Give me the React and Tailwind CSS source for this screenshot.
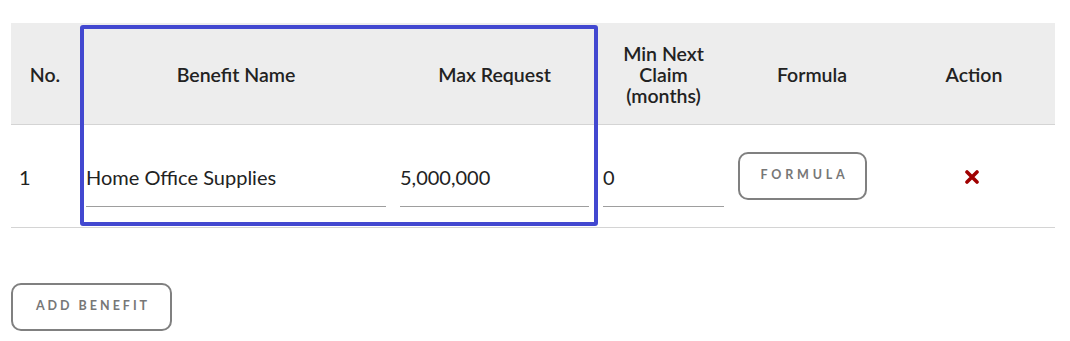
import React from "react"

const cols = [68, 314, 203, 135, 162, 162]

const App = () => {
  return (
    <div className="w-[1070px] h-[341px] bg-white relative" style={{ fontFamily: "Lato, 'Open Sans', sans-serif" }}>
      <div className="pt-[23px] px-[11px]">
        <table className="table-fixed border-collapse w-[1044px] text-[#222]">
          <colgroup>
            {cols.map((w, i) => (
              <col key={i} style={{ width: w }} />
            ))}
          </colgroup>
          <thead>
            <tr className="bg-[#ededed] border-b border-[#d4d4d4] h-[101px]">
              <th className="text-[19.5px] font-semibold leading-[21px] text-center pt-[3px]">No.</th>
              <th className="text-[19.5px] font-semibold leading-[21px] text-center pt-[3px]">Benefit Name</th>
              <th className="text-[19.5px] font-semibold leading-[21px] text-center pt-[3px]">Max Request</th>
              <th className="text-[19.5px] font-semibold leading-[21px] text-center pt-[3px] px-2">Min Next Claim (months)</th>
              <th className="text-[19.5px] font-semibold leading-[21px] text-center pt-[3px]">Formula</th>
              <th className="text-[19.5px] font-semibold leading-[21px] text-center pt-[3px]">Action</th>
            </tr>
          </thead>
          <tbody>
            <tr className="border-b border-[#d4d4d4] h-[103px]">
              <td className="px-2 text-[20px] pt-[3px]">1</td>
              <td className="px-[7px] pt-[3px]">
                <input readOnly value="Home Office Supplies" className="w-full h-[59px] border-b border-[#9e9e9e] text-[20px] outline-none bg-transparent" />
              </td>
              <td className="px-[7px] pt-[3px]">
                <input readOnly value="5,000,000" className="w-full h-[59px] border-b border-[#9e9e9e] text-[20px] outline-none bg-transparent" />
              </td>
              <td className="px-[7px] pt-[3px]">
                <input readOnly value="0" className="w-full h-[59px] border-b border-[#9e9e9e] text-[20px] outline-none bg-transparent" />
              </td>
              <td className="px-[7px]">
                <button className="w-[129px] h-[48px] border-2 border-[#808080] rounded-[10px] text-[12.5px] font-bold tracking-[3.8px] text-[#777] pl-[4px]">
                  FORMULA
                </button>
              </td>
              <td className="text-center">
                <svg width="14" height="14" viewBox="0 0 14 14" className="inline-block -ml-1">
                  <path d="M2 2 L12 12 M12 2 L2 12" stroke="#a00000" strokeWidth="3.6" strokeLinecap="round" />
                </svg>
              </td>
            </tr>
          </tbody>
        </table>
        <div className="mt-[55px]">
          <button className="w-[161px] h-[48px] border-2 border-[#808080] rounded-[10px] text-[12.5px] font-bold tracking-[3px] text-[#777] pl-[3px]">
            ADD BENEFIT
          </button>
        </div>
      </div>
      <div className="absolute left-[80px] top-[25px] w-[518px] h-[201px] border-4 border-[#4248d0] rounded-[3px] pointer-events-none" />
    </div>
  )
}

export default App
